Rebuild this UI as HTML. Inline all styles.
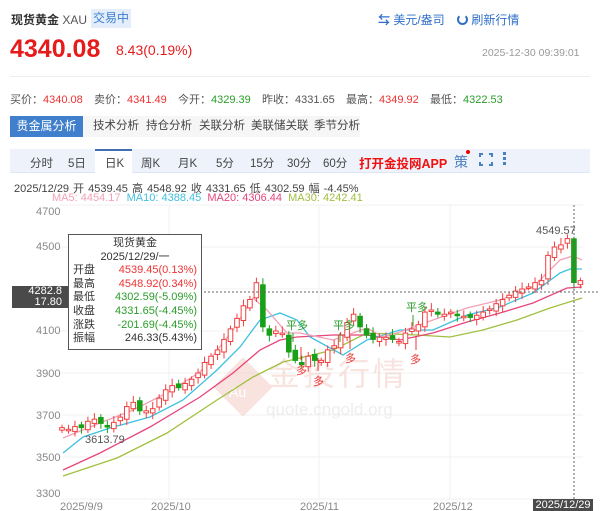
<!DOCTYPE html>
<html><head><meta charset="utf-8"><style>
*{margin:0;padding:0;box-sizing:border-box}
body{width:600px;height:511px;overflow:hidden;background:#fff;font-family:"Liberation Sans","Noto Sans CJK SC",sans-serif;color:#333;position:relative}
.a{position:absolute;white-space:nowrap}
.q{position:absolute;top:91px;font-size:11px;color:#555;white-space:nowrap}
.t{position:absolute;top:116px;font-size:11.5px;line-height:21px;color:#444;white-space:nowrap}
.k{position:absolute;top:155px;font-size:11.5px;color:#444;white-space:nowrap}
</style></head><body>
<div class="a" style="left:11px;top:11px;font-size:12px;font-weight:bold;color:#333">现货黄金 <span style="font-weight:normal;color:#555">XAU</span></div>
<div class="a" style="left:91px;top:9px;width:40px;height:19px;background:#e3eefa;color:#3d7fd0;font-size:12px;line-height:19px;text-align:center">交易中</div>
<div class="a" style="left:378px;top:11px;font-size:12px;color:#2f6fc8"><b style="font-size:12px">⇆</b> 美元/盎司</div>
<div class="a" style="left:457px;top:11px;font-size:12px;color:#2f6fc8"><span style="display:inline-block;width:11px;height:11px;border:2px solid #2f6fc8;border-radius:50%;border-top-color:transparent;vertical-align:-1px"></span> 刷新行情</div>
<div class="a" style="left:10px;top:35px;font-size:25px;font-weight:bold;color:#e61b1b">4340.08</div>
<div class="a" style="left:116px;top:42px;font-size:14px;color:#e61b1b">8.43(0.19%)</div>
<div class="a" style="left:482px;top:47px;font-size:10.5px;color:#999">2025-12-30 09:39:01</div>
<div class="a" style="left:10px;top:76px;width:580px;height:1px;background:#eee"></div>
<div class="q" style="left:10px">买价：<span style="color:#e33">4340.08</span></div>
<div class="q" style="left:94px">卖价：<span style="color:#e33">4341.49</span></div>
<div class="q" style="left:178px">今开：<span style="color:#2a9d2a">4329.39</span></div>
<div class="q" style="left:262px">昨收：<span style="color:#555">4331.65</span></div>
<div class="q" style="left:346px">最高：<span style="color:#e33">4349.92</span></div>
<div class="q" style="left:430px">最低：<span style="color:#2a9d2a">4322.53</span></div>
<div class="a" style="left:10px;top:116px;width:350px;height:21px;background:#f6f6f6"></div>
<div class="a" style="left:10px;top:116px;width:73px;height:21px;background:#3f7fcc;color:#fff;font-size:12px;line-height:21px;text-align:center">贵金属分析</div>
<div class="t" style="left:93px">技术分析</div>
<div class="t" style="left:146px">持仓分析</div>
<div class="t" style="left:199px">关联分析</div>
<div class="t" style="left:251px">美联储关联</div>
<div class="t" style="left:314px">季节分析</div>
<div class="a" style="left:10px;top:149px;width:580px;height:24px;background:#eef3fb;border-bottom:1px solid #dde6f2"></div>
<div class="a" style="left:95px;top:149px;width:37px;height:25px;background:#fff;border-top:2px solid #3f6fb0"></div>
<div class="k" style="left:30px">分时</div>
<div class="k" style="left:68px">5日</div>
<div class="k" style="left:105px">日K</div>
<div class="k" style="left:141px">周K</div>
<div class="k" style="left:178px">月K</div>
<div class="k" style="left:216px">5分</div>
<div class="k" style="left:250px">15分</div>
<div class="k" style="left:287px">30分</div>
<div class="k" style="left:323px">60分</div>
<div class="a" style="left:359px;top:153px;font-size:12.5px;font-weight:bold;color:#f01010">打开金投网APP</div>
<div class="a" style="left:454px;top:152px;font-size:14px;color:#4a7fc0">策</div>
<div class="a" style="left:466px;top:150px;width:4px;height:4px;border-radius:50%;background:#e00"></div>
<div class="a" style="left:479px;top:153px;width:14px;height:13px;border:2px solid #4a7fc0;"></div>
<div class="a" style="left:483px;top:150px;width:6px;height:19px;background:#eef3fb"></div>
<div class="a" style="left:476px;top:157px;width:20px;height:5px;background:#eef3fb"></div>
<div class="a" style="left:503px;top:152px;width:3px;height:3px;background:#4a7fc0;box-shadow:0 5px 0 #4a7fc0,0 10px 0 #4a7fc0"></div>
<div class="a" style="left:14px;top:180px;font-size:11px;color:#444;word-spacing:1px">2025/12/29 开 4539.45 高 4548.92 收 4331.65 低 4302.59 幅 -4.45%</div>
<div class="a" style="left:52px;top:192px;font-size:11px"><span style="color:#f4a0b8">MA5: 4454.17</span> &nbsp;<span style="color:#3fc0e0">MA10: 4388.45</span> &nbsp;<span style="color:#e8457a">MA20: 4306.44</span> &nbsp;<span style="color:#a0c040">MA30: 4242.41</span></div>
<svg class="a" style="left:0;top:0" width="600" height="511">
<g stroke="#f0f0f0" stroke-width="1">
<line x1="60" y1="205" x2="583" y2="205"/><line x1="60" y1="247" x2="583" y2="247"/><line x1="60" y1="289" x2="583" y2="289"/><line x1="60" y1="331" x2="583" y2="331"/><line x1="60" y1="373" x2="583" y2="373"/><line x1="60" y1="415" x2="583" y2="415"/><line x1="60" y1="457" x2="583" y2="457"/><line x1="60" y1="499" x2="583" y2="499"/>
<line x1="169" y1="205" x2="169" y2="499"/><line x1="319" y1="205" x2="319" y2="499"/><line x1="450" y1="205" x2="450" y2="499"/>
</g>
<g fill="#888" font-size="11" font-family="Liberation Sans">
<text x="36" y="215">4700</text><text x="36" y="250">4500</text><text x="36" y="334">4100</text><text x="36" y="377">3900</text><text x="36" y="419">3700</text><text x="36" y="461">3500</text><text x="36" y="497">3300</text>
<text x="60" y="510">2025/9/9</text><text x="151" y="510">2025/10</text><text x="300" y="510">2025/11</text><text x="433" y="510">2025/12</text>
</g>
<g opacity="0.5">
<rect x="222" y="366" width="42" height="42" transform="rotate(45 243 387)" fill="#f3c9c0"/>
<text x="229" y="397" font-size="14" fill="#fff" font-family="Liberation Sans">Au</text>
<text x="268" y="385" font-size="32" fill="#f3c9c0" font-family="Noto Sans CJK SC" letter-spacing="3">金投行情</text>
<text x="266" y="415" font-size="17" fill="#ddd" font-family="Liberation Sans">quote.cngold.org</text>
</g>
<g fill="none" stroke-width="1.3">
<polyline stroke="#a0c040" points="63,476 117,458 167,433 217,400 253,377 283,362 300,358 333,350 367,333 417,335 450,337 483,330 517,320 550,308 582,298"/>
<polyline stroke="#e8457a" points="63,470 100,453 150,427 200,397 233,373 260,350 280,340 297,337 333,335 367,335 400,340 433,333 467,322 500,313 533,303 567,288 582,287"/>
<polyline stroke="#3fc0e0" points="63,453 83,437 110,428 150,417 183,400 217,370 240,347 260,320 280,313 297,320 310,337 343,355 367,340 400,330 433,330 467,315 500,307 533,293 560,273 570,269 582,269"/>
<polyline stroke="#f4a0b8" points="63,438 100,423 133,410 167,393 200,372 233,330 253,298 267,310 287,333 300,333 333,340 367,328 383,337 400,332 433,320 467,308 500,300 533,287 560,260 573,256 582,260"/>
</g>
<g id="cd"></g>
<g font-size="11" font-family="Noto Sans CJK SC" fill="#2a9d2a">
<text x="286" y="329">平多</text><text x="333" y="329">平多</text><text x="406" y="311">平多</text>
</g>
<g stroke="#2a9d2a"><line x1="293" y1="333" x2="293" y2="342"/><line x1="340" y1="333" x2="340" y2="342"/><line x1="413" y1="315" x2="413" y2="326"/></g>
<g stroke="#e33"><line x1="318" y1="358" x2="318" y2="371"/><line x1="301" y1="347" x2="301" y2="360"/><line x1="350" y1="336" x2="350" y2="349"/><line x1="416" y1="336" x2="416" y2="350"/></g>
<g font-size="11" font-family="Noto Sans CJK SC" fill="#e33">
<text x="313" y="385">多</text><text x="296" y="374">多</text><text x="345" y="362">多</text><text x="410" y="363">多</text>
</g>
<text x="85" y="443" font-size="11" fill="#555" font-family="Liberation Sans">3613.79</text>
<text x="536" y="234" font-size="11" fill="#555" font-family="Liberation Sans">4549.57</text>
<line x1="60" y1="292" x2="600" y2="292" stroke="#666" stroke-dasharray="2,2"/>
<line x1="574" y1="205" x2="574" y2="499" stroke="#666" stroke-dasharray="2,2"/>
</svg>
<div class="a" style="left:12px;top:286px;width:56px;height:22px;background:#4a4a4a;color:#fff;font-size:11px;line-height:11px;text-align:right;padding-right:6px">4282.8<br>17.80</div>
<div class="a" style="left:68px;top:234px;width:134px;height:116px;background:#fff;border:1px solid #555;font-size:11px;line-height:13.6px;padding:2px 4px;color:#333">
<div style="text-align:center">现货黄金</div><div style="text-align:center">2025/12/29/一</div>
<div>开盘<span style="float:right;color:#e33">4539.45(0.13%)</span></div>
<div>最高<span style="float:right;color:#e33">4548.92(0.34%)</span></div>
<div>最低<span style="float:right;color:#2a9d2a">4302.59(-5.09%)</span></div>
<div>收盘<span style="float:right;color:#2a9d2a">4331.65(-4.45%)</span></div>
<div>涨跌<span style="float:right;color:#2a9d2a">-201.69(-4.45%)</span></div>
<div>振幅<span style="float:right">246.33(5.43%)</span></div>
</div>
<div class="a" style="left:533px;top:499px;width:60px;height:12px;background:#4a4a4a;color:#fff;font-size:11px;line-height:12px;text-align:center">2025/12/29</div>
<script>
var c=[3640,3632,3645,3640,3670,3680,3660,3645,3665,3690,3740,3760,3720,3720,3730,3780,3820,3840,3830,3850,3870,3900,3950,3980,4010,4060,4110,4160,4220,4250,4330,4120,4080,4100,4090,4000,3960,3940,3980,3960,3960,4010,4030,4080,4140,4180,4120,4080,4060,4070,4070,4060,4050,4090,4110,4130,4190,4200,4180,4180,4190,4175,4170,4165,4175,4190,4205,4230,4250,4270,4290,4300,4310,4330,4340,4460,4500,4510,4540,4331,4340];
var g='',Y=function(p){return 205+(4700-p)*0.21};
for(var i=0;i<c.length;i++){var x=62+i*6.48,o=i?c[i-1]+(i%3?-10:8):3628,cl=c[i];if(i==79)o=4539;var up=cl>=o,col=up?'#f04040':'#18a018';
var hi=Math.max(o,cl)+14+(i*7%20),lo=Math.min(o,cl)-14-(i*5%18);if(i==79){hi=4549;lo=4302}
g+='<line x1="'+x+'" y1="'+Y(hi)+'" x2="'+x+'" y2="'+Y(lo)+'" stroke="'+col+'"/>';
var t=Y(Math.max(o,cl)),h=Math.max(1.5,Math.abs(Y(o)-Y(cl)));
g+='<rect x="'+(x-2.3)+'" y="'+t+'" width="4.6" height="'+h+'" fill="'+(up?'#fff':col)+'" stroke="'+col+'"/>';}
document.getElementById('cd').innerHTML=g;
</script>
</body></html>
